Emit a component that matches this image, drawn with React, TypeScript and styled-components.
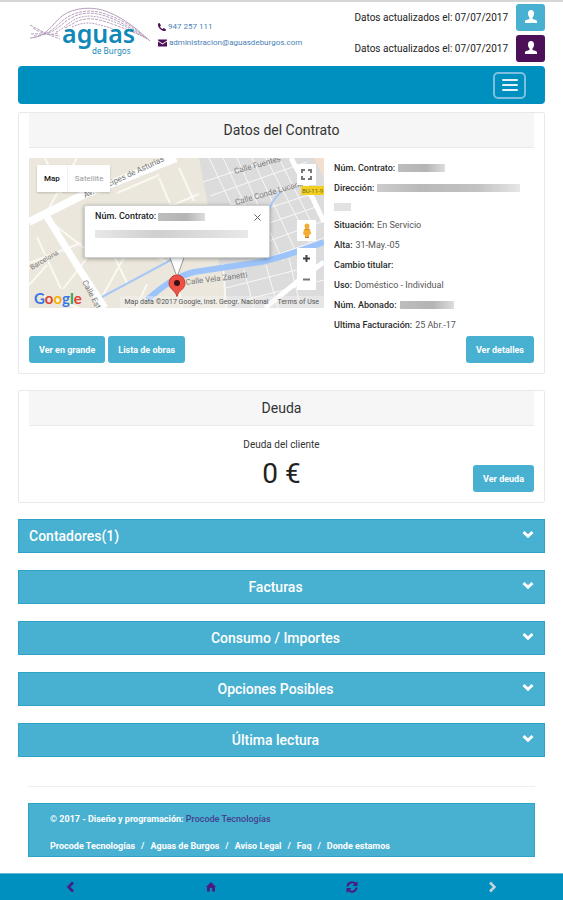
import React from "react";
import styled, { createGlobalStyle } from "styled-components";

const colors = {
  brand: "#0090c0",
  accent: "#48b0d0",
  accentEdge: "#2fa3c6",
  purple: "#4b1058",
  link: "#4a7fb5",
  border: "#e9e9e9",
  heading: "#f6f6f6",
  text: "#333333",
};

const GlobalStyle = createGlobalStyle`
  *, *::before, *::after { box-sizing: border-box; }
  body {
    margin: 0;
    background: #ffffff;
    color: ${colors.text};
    font-family: Roboto, "Liberation Sans", sans-serif;
    font-size: 10px;
    line-height: 20px;
  }
  button { font-family: inherit; cursor: pointer; }
  a { text-decoration: none; color: inherit; }
  h1, h2, p, dl, dd, ul { margin: 0; padding: 0; }
`;

const Page = styled.div`
  min-height: 100vh;
  display: flex;
  flex-direction: column;
  border-top: 2px solid #d6d6d6;
`;

const Container = styled.div`
  padding: 0 18px;
`;

const Header = styled.header`
  display: flex;
  align-items: flex-start;
  height: 64px;
  padding-left: 10px;
`;

const LogoLink = styled.a`
  display: block;
  width: 124px;
  height: 58px;
`;

const ContactList = styled.address`
  display: flex;
  flex-direction: column;
  padding: 17px 0 0 6px;
  font-style: normal;
  font-size: 8px;
  line-height: 16px;
  color: ${colors.link};
`;

const ContactLink = styled.a`
  display: flex;
  align-items: center;
  gap: 2px;
`;

const Updates = styled.div`
  display: flex;
  flex-direction: column;
  gap: 4px;
  margin-left: auto;
  padding-top: 2px;
`;

const UpdateRow = styled.div`
  display: flex;
  align-items: center;
  justify-content: flex-end;
  gap: 8px;
  height: 27px;
`;

const UpdateText = styled.span`
  color: #222222;
`;

const UserButton = styled.button<{ $color: string }>`
  display: grid;
  place-items: center;
  width: 29px;
  height: 27px;
  padding: 0 0 2px;
  border: 0;
  border-radius: 3px;
  background: ${(p) => p.$color};
`;

const Navbar = styled.nav`
  display: flex;
  align-items: center;
  justify-content: flex-end;
  height: 38px;
  padding-right: 19px;
  border-radius: 4px;
  background: ${colors.brand};
`;

const MenuButton = styled.button`
  display: flex;
  flex-direction: column;
  align-items: center;
  justify-content: center;
  gap: 3px;
  width: 33px;
  height: 27px;
  padding: 0;
  border: 2px solid #7cbfe0;
  border-radius: 5px;
  background: transparent;
`;

const MenuBar = styled.span`
  width: 16px;
  height: 2px;
  border-radius: 1px;
  background: #e4f3fa;
`;

const Card = styled.section`
  margin-top: 8px;
  padding: 0 10px 10px;
  border: 1px solid ${colors.border};
  border-radius: 2px;

  & + & { margin-top: 16px; }
`;

const CardTitle = styled.h2`
  height: 35px;
  border-bottom: 1px solid ${colors.border};
  background: ${colors.heading};
  font-size: 14px;
  font-weight: 400;
  line-height: 34px;
  text-align: center;
`;

const ContractGrid = styled.div`
  display: grid;
  grid-template-columns: 59fr 40fr;
  gap: 10px;
  padding-top: 10px;
`;

const MapBox = styled.div`
  position: relative;
  height: 150px;
  overflow: hidden;
  background: #ebe7dc;
`;

const MapTypes = styled.div`
  position: absolute;
  top: 7px;
  left: 8px;
  display: flex;
  background: #ffffff;
  box-shadow: 0 1px 2px rgba(0, 0, 0, 0.2);
`;

const MapTypeButton = styled.button<{ $active?: boolean }>`
  height: 27px;
  padding: 0 7px;
  border: 0;
  border-left: ${(p) => (p.$active ? "0" : "1px solid #f0f0f0")};
  background: transparent;
  color: ${(p) => (p.$active ? "#111111" : "#999999")};
  font-size: 8px;
  font-weight: ${(p) => (p.$active ? 500 : 400)};
`;

const InfoWindow = styled.div`
  position: absolute;
  top: 47px;
  left: 55px;
  width: 186px;
  height: 53px;
  padding: 0 10px;
  border: 1px solid #d0d0d0;
  border-radius: 2px;
  background: #ffffff;
  box-shadow: 0 1px 4px rgba(0, 0, 0, 0.35);
  color: #222222;
  font-size: 9px;
  font-weight: 500;
`;

const InfoClose = styled.button`
  position: absolute;
  top: 5px;
  right: 6px;
  display: grid;
  place-items: center;
  width: 12px;
  height: 12px;
  padding: 0;
  border: 0;
  background: transparent;
`;

const MapControl = styled.button<{ $top: number }>`
  position: absolute;
  top: ${(p) => p.$top}px;
  right: 8px;
  display: grid;
  place-items: center;
  width: 19px;
  height: 21px;
  padding: 0;
  border: 0;
  background: #ffffff;
`;

const MapBrand = styled.div`
  position: absolute;
  left: 5px;
  bottom: 0;
  font-family: Lato, sans-serif;
  font-size: 15px;
  font-weight: 700;
`;

const BrandLetter = styled.span<{ $color: string }>`
  color: ${(p) => p.$color};
`;

const MapCredits = styled.div`
  position: absolute;
  right: 0;
  bottom: 0;
  display: flex;
  gap: 9px;
  padding: 0 5px 0 4px;
  background: rgba(245, 245, 245, 0.4);
  color: #555555;
  font-size: 7px;
  line-height: 12px;
`;

const Redacted = styled.span<{ $width: number; $tone?: string }>`
  display: inline-block;
  width: ${(p) => p.$width}px;
  max-width: 100%;
  height: 8px;
  vertical-align: middle;
  background: ${(p) =>
    p.$tone ?? "linear-gradient(90deg, #bdbdbd, #b4b4b4 60%, #dddddd)"};
`;

const RedactedLine = styled(Redacted)`
  display: block;
  margin-top: 4px;
`;

const Details = styled.dl`
  display: flex;
  flex-direction: column;
`;

const DetailRow = styled.div`
  display: flex;
  gap: 3px;
  height: 20px;
  align-items: center;
  line-height: 16px;
  font-size: 9px;
  white-space: nowrap;
`;

const DetailTerm = styled.dt`
  color: #2b2b2b;
  font-weight: 500;
`;

const DetailValue = styled.dd`
  display: flex;
  align-items: center;
  color: #555555;
`;

const AddressRest = styled.div`
  display: flex;
  align-items: center;
  height: 17px;
`;

const Actions = styled.div`
  display: flex;
  gap: 3px;
  padding-top: 1px;
`;

const ActionButton = styled.button<{ $end?: boolean }>`
  height: 27px;
  margin-left: ${(p) => (p.$end ? "auto" : "0")};
  padding: 0 10px;
  border: 0;
  border-radius: 3px;
  background: ${colors.accent};
  color: #ffffff;
  font-size: 9px;
  font-weight: 700;
`;

const DebtBody = styled.div`
  display: grid;
  grid-template-columns: 1fr auto 1fr;
  align-items: end;
  padding-top: 9px;
`;

const DebtSummary = styled.div`
  grid-column: 2;
  text-align: center;
`;

const DebtLabel = styled.p`
  font-size: 10px;
`;

const DebtAmount = styled.p`
  color: #222222;
  font-size: 28px;
  line-height: 37px;
`;

const Sections = styled.div`
  display: flex;
  flex-direction: column;
  gap: 17px;
  padding-top: 16px;
`;

const SectionButton = styled.button<{ $start?: boolean }>`
  display: flex;
  width: 100%;
  height: 34px;
  padding: 0 10px;
  border: 1px solid ${colors.accentEdge};
  background: ${colors.accent};
  color: #ffffff;
  font-size: 14px;
  font-weight: 500;
  line-height: 32px;
  text-align: ${(p) => (p.$start ? "left" : "center")};
`;

const SectionLabel = styled.span`
  flex: 1;
`;

const ChevronBox = styled.span`
  padding-top: 10px;
  line-height: 0;
`;

const Footer = styled.footer`
  margin: 29px 10px 0;
  padding-top: 16px;
  border-top: 1px solid #eeeeee;
`;

const FooterPanel = styled.div`
  display: flex;
  flex-direction: column;
  gap: 7px;
  padding: 5px 21px 0;
  border: 1px solid ${colors.accentEdge};
  background: ${colors.accent};
  color: #ffffff;
  font-weight: 700;
  font-size: 9px;
`;

const CreditLink = styled.a`
  color: #45408f;
  font-weight: 500;
`;

const FooterLinks = styled.ul`
  display: flex;
  flex-wrap: wrap;
  list-style: none;
`;

const FooterItem = styled.li`
  & + &::before {
    content: "/";
    padding: 0 6px;
  }
`;

const BottomNav = styled.nav`
  display: grid;
  grid-template-columns: repeat(4, 1fr);
  height: 27px;
  margin-top: auto;
  border-top: 1px solid #5fb8d6;
  background: ${colors.brand};
`;

const BottomButton = styled.button`
  display: grid;
  place-items: center;
  padding: 0;
  border: 0;
  background: transparent;
`;

const Logo = () => (
  <svg width="124" height="58" viewBox="28 2 124 58" role="img" aria-label="Aguas de Burgos">
    <g fill="none" stroke="#b7a0bd" strokeWidth="1">
      <path d="M30 38C46 38 52 24 62 16 74 7 94 6 108 12 126 19 140 32 150 41" />
      <path d="M34 36C50 36 56 25 66 18 78 10 94 9 108 15 126 21 138 31 149 40" strokeDasharray="3 1" />
      <path d="M48 33C58 30 63 22 73 17 84 11 98 13 108 17 124 23 136 31 147 39" strokeDasharray="3 1" />
      <path d="M56 32C64 29 68 22 78 18 88 14 100 17 109 20 124 25 134 31 145 38" strokeDasharray="2 1" />
      <path d="M65 28C72 25 76 20 86 19 95 18 104 21 112 24 124 28 132 32 142 36" strokeDasharray="3 1" />
      <path d="M72 27C80 23 88 22 96 24 104 26 108 27 113 29" strokeDasharray="2 1" />
      <path d="M30 25C40 30 46 34 60 39M33 28C42 34 48 34 60 36M31 34C40 33 48 36 58 33" strokeDasharray="3 1" />
    </g>
    <text x="62" y="43" fill="#1189b8" fontFamily="Noto Sans, sans-serif" fontSize="25" fontWeight="600">aguas</text>
    <text x="92" y="54" fill="#1189b8" fontFamily="Noto Sans, sans-serif" fontSize="8">de Burgos</text>
  </svg>
);

const PhoneIcon = () => (
  <svg width="8" height="8" viewBox="0 0 16 16" aria-hidden="true">
    <path fill={colors.purple} d="M3 0 6 5 4 7q2 4 5 5l2-2 5 3-1 3Q9 17 4 12-1 7 0 1Z" />
  </svg>
);

const MailIcon = () => (
  <svg width="9" height="8" viewBox="0 0 18 14" aria-hidden="true">
    <path fill={colors.purple} d="M0 0h18v2L9 8 0 2ZM0 4l9 6 9-6v10H0Z" />
  </svg>
);

const UserIcon = () => (
  <svg width="12" height="13" viewBox="0 0 12 13" aria-hidden="true">
    <path
      fill="#ffffff"
      d="M6 0C8 0 9 1.500 9 3.500 9 5.300 8.500 6.500 7.500 7.500V9l3.200 1c.9.300 1.300.8 1.300 1.600V13H0v-1.400c0-.8.400-1.300 1.300-1.600L4.500 9V7.500C3.500 6.500 3 5.300 3 3.500 3 1.500 4 0 6 0Z"
    />
  </svg>
);

const ChevronDown = () => (
  <svg width="12" height="9" viewBox="0 0 12 9" aria-hidden="true">
    <path d="M1.500 2 6 6.300 10.500 2" fill="none" stroke="#ffffff" strokeWidth="3" />
  </svg>
);

const StreetMap = () => (
  <svg width="100%" height="150" viewBox="0 0 295 150" preserveAspectRatio="xMidYMid slice" aria-hidden="true">
    <rect width="295" height="150" fill="#ebe7dc" />
    <path d="M170 0H295V150H199L190 105Z" fill="#dcdcdc" />
    <path d="M285 0h10v20Z" fill="#f4dfce" />
    <g stroke="#faf8f2" strokeWidth="2" fill="none">
      <path d="M16 0 32 36M48 0 20 50M55 90 17 60M8 79 32 131M34 131 76 77M0 127 18 107M67 150 104 83M85 98 98 125M120 57 170 36M88 35 130 17M130 20 145 55M150 10 165 43M15 138 50 150M104 87 140 105M0 105 52 85" />
      <path d="M58 125 70 150M118 126 107 150M147 113 153 150M194 106 197 150" />
    </g>
    <g stroke="#f8f8f8" strokeWidth="1" fill="none">
      <path d="M180 0 226 96M194 0 239 96M208 0 254 103M223 0 268 96M237 0 281 85M250 0 286 72M174 24 246 0M181 38 278 4M186 52 282 21M193 65 286 35M202 78 290 48M215 92 295 63M225 105 295 80M215 112 225 150M237 107 249 150M260 100 270 143M197 130 295 105M200 146 295 122" />
    </g>
    <path d="M0 64 54 37 147 0" stroke="#ffffff" strokeWidth="8" fill="none" />
    <path d="M18 59 51 112 76 150" stroke="#ffffff" strokeWidth="7" fill="none" />
    <path d="M262 0 284 41 295 64M236 150 268 124 295 104" stroke="#ffffff" strokeWidth="5" fill="none" />
    <path d="M73 139 142 102" stroke="#a9c9f4" strokeWidth="2" fill="none" />
    <path d="M118 142C135 127 146 119 165 114L232 104C255 99 275 91 295 84" stroke="#9dc4fa" strokeWidth="6" fill="none" />
    <path d="M252 34C234 51 242 62 236 76 234 83 239 89 238 95" stroke="#a9c9f4" strokeWidth="2" fill="none" />
    <g fill="#777777" fontFamily="Roboto, sans-serif" fontSize="8">
      <text transform="translate(56 40) rotate(-25)">Av. Príncipes de Asturias</text>
      <text transform="translate(206 16) rotate(-16)">Calle Fuentes</text>
      <text transform="translate(207 47) rotate(-16)">Calle Conde Lucanor</text>
      <text transform="translate(157 127) rotate(-7)">Calle Vela Zanetti</text>
      <text transform="translate(3 112) rotate(-31)" fontSize="7">Barcelona</text>
      <text transform="translate(53 124) rotate(62)">Calle Esteban</text>
    </g>
    <rect x="272" y="28" width="23" height="9" fill="#f4cf20" />
    <text x="273" y="35" fill="#666633" fontFamily="Roboto, sans-serif" fontSize="6">BU-11-9</text>
    <path d="M140 97 148 119 156 97Z" fill="#ffffff" stroke="#999999" strokeWidth="1" />
    <path d="M148 139C147 132 140 132 140 125a8 8 0 0 1 16 0c0 7-7 7-8 14Z" fill="#ed5145" stroke="#c63d34" />
    <circle cx="148" cy="125" r="3" fill="#3b1010" />
  </svg>
);

const googleLetters = [
  ["G", "#3779e5"],
  ["o", "#e34133"],
  ["o", "#f4b400"],
  ["g", "#3779e5"],
  ["l", "#2fa350"],
  ["e", "#e34133"],
];

const ContractMap = () => (
  <MapBox>
    <StreetMap />
    <MapTypes>
      <MapTypeButton type="button" $active>Map</MapTypeButton>
      <MapTypeButton type="button">Satellite</MapTypeButton>
    </MapTypes>
    <InfoWindow>
      Núm. Contrato: <Redacted $width={47} />
      <RedactedLine $width={153} $tone="linear-gradient(90deg, #e8e8e8, #cfcfcf 40%, #e8e8e8)" />
      <InfoClose type="button" aria-label="Cerrar">
        <svg width="7" height="7" viewBox="0 0 7 7">
          <path d="M.500.500 6.500 6.500M6.500.500.500 6.500" stroke="#666666" />
        </svg>
      </InfoClose>
    </InfoWindow>
    <MapControl type="button" $top={6} aria-label="Pantalla completa">
      <svg width="11" height="11" viewBox="0 0 11 11">
        <path d="M1 4V1h3M7 1h3v3M10 7v3H7M4 10H1V7" fill="none" stroke="#777777" strokeWidth="2" />
      </svg>
    </MapControl>
    <MapControl type="button" $top={62} aria-label="Street View">
      <svg width="10" height="16" viewBox="0 0 10 16">
        <circle cx="5" cy="3" r="2.500" fill="#f4ad2e" />
        <path d="M2 6h6l1 5-2 1v2.500H3V12L1 11Z" fill="#f4ad2e" />
        <path d="M3 6h4M3 14.500h4" stroke="#b9781c" />
      </svg>
    </MapControl>
    <MapControl type="button" $top={90} aria-label="Acercar">
      <svg width="7" height="7" viewBox="0 0 7 7">
        <path d="M0 3.500h7M3.500 0v7" stroke="#444444" strokeWidth="2" />
      </svg>
    </MapControl>
    <MapControl type="button" $top={111} aria-label="Alejar">
      <svg width="7" height="7" viewBox="0 0 7 7">
        <path d="M0 3.500h7" stroke="#777777" strokeWidth="2" />
      </svg>
    </MapControl>
    <MapBrand>
      {googleLetters.map(([letter, color], i) => (
        <BrandLetter key={i} $color={color}>{letter}</BrandLetter>
      ))}
    </MapBrand>
    <MapCredits>
      <span>Map data ©2017 Google, Inst. Geogr. Nacional</span>
      <a href="#terms">Terms of Use</a>
    </MapCredits>
  </MapBox>
);

const Detail = ({ term, children }: { term: string; children?: React.ReactNode }) => (
  <DetailRow>
    <DetailTerm>{term}:</DetailTerm>
    <DetailValue>{children}</DetailValue>
  </DetailRow>
);

const sections = ["Contadores(1)", "Facturas", "Consumo / Importes", "Opciones Posibles", "Última lectura"];
const footerLinks = ["Procode Tecnologías", "Aguas de Burgos", "Aviso Legal", "Faq", "Donde estamos"];

export default function App() {
  return (
    <Page>
      <GlobalStyle />
      <Container>
        <Header>
          <LogoLink href="#inicio"><Logo /></LogoLink>
          <ContactList>
            <ContactLink href="tel:947257111"><PhoneIcon /> 947 257 111</ContactLink>
            <ContactLink href="mailto:administracion@aguasdeburgos.com">
              <MailIcon /> administracion@aguasdeburgos.com
            </ContactLink>
          </ContactList>
          <Updates>
            {[colors.accent, colors.purple].map((color) => (
              <UpdateRow key={color}>
                <UpdateText>Datos actualizados el: 07/07/2017</UpdateText>
                <UserButton type="button" $color={color} aria-label="Usuario"><UserIcon /></UserButton>
              </UpdateRow>
            ))}
          </Updates>
        </Header>

        <Navbar>
          <MenuButton type="button" aria-label="Menú">
            <MenuBar /><MenuBar /><MenuBar />
          </MenuButton>
        </Navbar>

        <Card>
          <CardTitle>Datos del Contrato</CardTitle>
          <ContractGrid>
            <ContractMap />
            <Details>
              <Detail term="Núm. Contrato"><Redacted $width={47} /></Detail>
              <Detail term="Dirección">
                <Redacted $width={143} $tone="linear-gradient(90deg, #cccccc, #b9b9b9 30%, #c2c2c2 70%, #e6e6e6)" />
              </Detail>
              <AddressRest><Redacted $width={17} $tone="#e2e2e2" /></AddressRest>
              <Detail term="Situación">En Servicio</Detail>
              <Detail term="Alta">31-May.-05</Detail>
              <Detail term="Cambio titular" />
              <Detail term="Uso">Doméstico - Individual</Detail>
              <Detail term="Núm. Abonado"><Redacted $width={54} /></Detail>
              <Detail term="Ultima Facturación">25 Abr.-17</Detail>
            </Details>
          </ContractGrid>
          <Actions>
            <ActionButton type="button">Ver en grande</ActionButton>
            <ActionButton type="button">Lista de obras</ActionButton>
            <ActionButton type="button" $end>Ver detalles</ActionButton>
          </Actions>
        </Card>

        <Card>
          <CardTitle>Deuda</CardTitle>
          <DebtBody>
            <DebtSummary>
              <DebtLabel>Deuda del cliente</DebtLabel>
              <DebtAmount>0 €</DebtAmount>
            </DebtSummary>
            <Actions>
              <ActionButton type="button" $end>Ver deuda</ActionButton>
            </Actions>
          </DebtBody>
        </Card>

        <Sections>
          {sections.map((title, i) => (
            <SectionButton key={title} type="button" $start={i === 0} aria-expanded={false}>
              <SectionLabel>{title}</SectionLabel>
              <ChevronBox><ChevronDown /></ChevronBox>
            </SectionButton>
          ))}
        </Sections>

        <Footer>
          <FooterPanel>
            <p>
              © 2017 - Diseño y programación: <CreditLink href="#procode">Procode Tecnologías</CreditLink>
            </p>
            <FooterLinks>
              {footerLinks.map((label) => (
                <FooterItem key={label}><a href="#enlace">{label}</a></FooterItem>
              ))}
            </FooterLinks>
          </FooterPanel>
        </Footer>
      </Container>

      <BottomNav>
        <BottomButton type="button" aria-label="Atrás">
          <svg width="9" height="12" viewBox="0 0 9 12">
            <path d="M7 1.500 2.500 6 7 10.500" fill="none" stroke="#4b1a80" strokeWidth="2.500" />
          </svg>
        </BottomButton>
        <BottomButton type="button" aria-label="Inicio">
          <svg width="10" height="10" viewBox="0 0 10 10">
            <path d="M5 0 10 5H9v4.500H6.200V6H3.800v3.500H1V5H0Z" fill="#4b1a80" />
          </svg>
        </BottomButton>
        <BottomButton type="button" aria-label="Actualizar">
          <svg width="12" height="12" viewBox="0 0 12 12">
            <path d="M1.500 5.500A4.500 4.500 0 0 1 9.500 3M10.500 6.500A4.500 4.500 0 0 1 2.500 9" fill="none" stroke="#4b1a80" strokeWidth="2" />
            <path d="M11.500 0v5h-5ZM.500 12V7h5Z" fill="#4b1a80" />
          </svg>
        </BottomButton>
        <BottomButton type="button" aria-label="Adelante">
          <svg width="9" height="12" viewBox="0 0 9 12">
            <path d="M2 1.500 6.500 6 2 10.500" fill="none" stroke="#c5d3da" strokeWidth="2.500" />
          </svg>
        </BottomButton>
      </BottomNav>
    </Page>
  );
}
